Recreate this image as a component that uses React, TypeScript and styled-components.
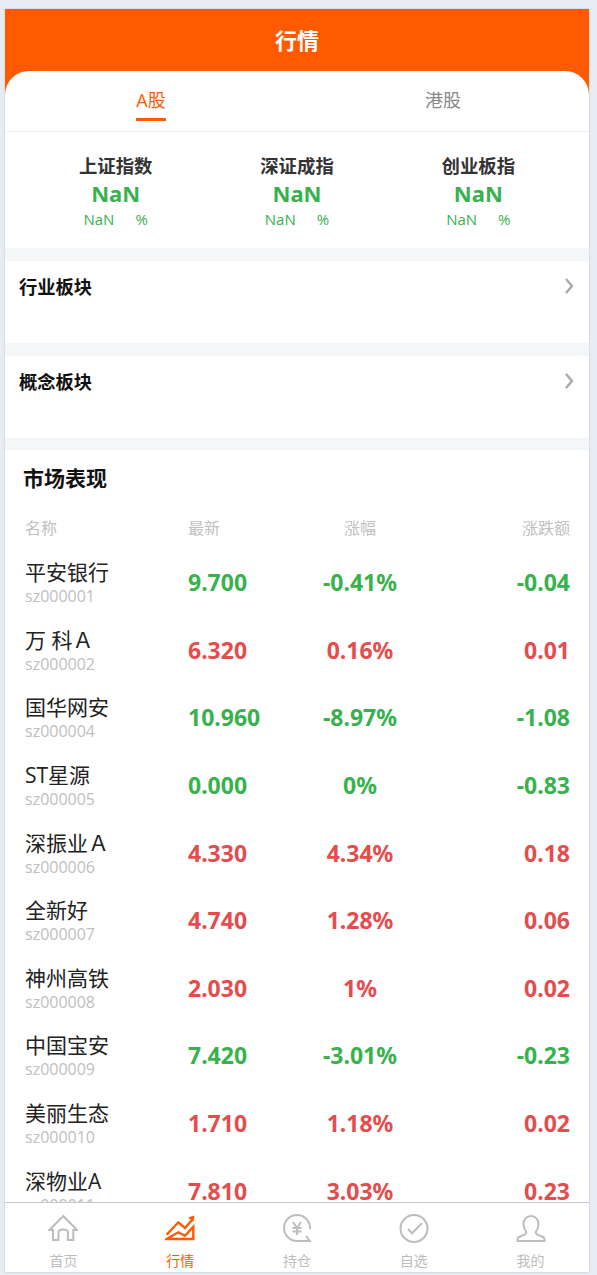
import styled, { createGlobalStyle } from "styled-components";

const GlobalStyle = createGlobalStyle`
  html, body {
    margin: 0;
    padding: 0;
    background: #e8edf5;
  }

  * {
    box-sizing: border-box;
  }
`;

const fontStack = `"Open Sans", "Noto Sans CJK SC", sans-serif`;
const orange = "#ff5a00";
const green = "#37b24d";
const red = "#e64c4c";

const Page = styled.div`
  width: 597px;
  height: 1275px;
  padding: 9px 8px 3px 5px;
  font-family: ${fontStack};
  overflow: hidden;
`;

const Phone = styled.div`
  position: relative;
  height: 100%;
  background: #fff;
  overflow: hidden;
  display: flex;
  flex-direction: column;
  box-shadow: 0 0 2px rgba(0, 0, 0, 0.2);
`;

const Header = styled.div`
  height: 86px;
  flex-shrink: 0;
  background: ${orange};
  color: #fff;
  font-size: 22px;
  font-weight: 700;
  text-align: center;
  line-height: 63px;
`;

const Body = styled.div`
  flex-grow: 1;
  overflow: hidden;
  margin-top: -24px;
  background: #fff;
  border-radius: 24px 24px 0 0;
`;

const Tabs = styled.div`
  display: flex;
  height: 61px;
  border-bottom: 1px solid #f0f0f0;
`;

const TabCell = styled.div`
  flex: 1;
  display: flex;
  justify-content: center;
`;

const Tab = styled.div<{ $active?: boolean }>`
  height: 50px;
  padding-top: 15px;
  font-size: 18px;
  line-height: 28px;
  color: ${(props) => (props.$active ? orange : "#888")};
  border-bottom: 3px solid ${(props) => (props.$active ? orange : "transparent")};
`;

const Indexes = styled.div`
  display: flex;
  padding: 21px 20px 0;
  height: 116px;
`;

const IndexItem = styled.div`
  flex: 1;
  text-align: center;
`;

const IndexName = styled.div`
  font-size: 18.4px;
  font-weight: 700;
  line-height: 26px;
  color: #333;
`;

const IndexValue = styled.div`
  font-family: "Noto Sans", sans-serif;
  font-size: 22px;
  font-weight: 700;
  line-height: 29px;
  color: ${green};
`;

const IndexChange = styled.div`
  display: flex;
  justify-content: center;
  gap: 21px;
  margin-top: 1px;
  font-size: 15px;
  line-height: 20px;
  color: ${green};
`;

const Sector = styled.div`
  border-top: 13px solid #f5f6f8;
  height: 95px;
  padding: 12px 16px 12px 14px;
  display: flex;
  justify-content: space-between;
`;

const SectorTitle = styled.div`
  font-size: 18.3px;
  font-weight: 700;
  line-height: 28px;
  color: #111;
`;

const Chevron = styled.svg`
  width: 8px;
  height: 16px;
  margin-top: 5px;
  fill: none;
  stroke: #a9a9ae;
  stroke-width: 2.4;
`;

const Market = styled.div`
  border-top: 12px solid #f5f6f8;
  padding: 0 19px;
`;

const MarketTitle = styled.div`
  margin-left: -1px;
  font-size: 21px;
  font-weight: 700;
  line-height: 28px;
  padding: 14px 0 0;
  color: #111;
`;

const Columns = `
  display: grid;
  grid-template-columns: 164px 100px 1fr 100px;
  align-items: center;
`;

const HeadRow = styled.div`
  ${Columns}
  margin-top: 23px;
  height: 24px;
  font-size: 16px;
  color: #c0c0c0;
`;

const HeadName = styled.div`
  padding-left: 1px;
`;

const HeadMid = styled.div`
  text-align: center;
  padding-right: 38px;
`;

const HeadRight = styled.div`
  text-align: right;
`;

const Row = styled.div`
  ${Columns}
  height: 67.6px;
`;

const Rows = styled.div`
  margin-top: 9.5px;
`;

const StockInfo = styled.div`
  padding: 1px 0 0 1px;
`;

const StockName = styled.div`
  font-size: 21px;
  line-height: 26px;
  color: #222;
`;

const StockCode = styled.div`
  margin-top: 2px;
  font-size: 16px;
  line-height: 19px;
  color: #c0c0c0;
`;

const Num = styled.div<{ $up: boolean }>`
  font-family: "Noto Sans", sans-serif;
  font-size: 23px;
  font-weight: 700;
  color: ${(props) => (props.$up ? red : green)};
`;

const NumMid = styled(Num)`
  text-align: center;
  padding-right: 38px;
`;

const NumRight = styled(Num)`
  text-align: right;
`;

const TabBar = styled.div`
  position: absolute;
  left: 0;
  right: 0;
  bottom: 0;
  height: 70px;
  background: #fff;
  border-top: 1px solid #c8c8c8;
  display: flex;
`;

const NavItem = styled.div<{ $active?: boolean }>`
  flex: 1;
  display: flex;
  flex-direction: column;
  align-items: center;
  padding-top: 11px;
  font-size: 14px;
  line-height: 20px;
  color: ${(props) => (props.$active ? orange : "#bdbdbd")};
`;

const NavIcon = styled.svg`
  width: 30px;
  height: 30px;
  margin-bottom: 7px;
  fill: none;
  stroke: currentColor;
  stroke-width: 2;
`;

const ArrowHead = styled.path`
  fill: currentColor;
  stroke: none;
`;

const indexes = ["上证指数", "深证成指", "创业板指"];

const stocks = [
  { name: "平安银行", code: "sz000001", price: "9.700", pct: "-0.41%", diff: "-0.04", up: false },
  { name: "万 科Ａ", code: "sz000002", price: "6.320", pct: "0.16%", diff: "0.01", up: true },
  { name: "国华网安", code: "sz000004", price: "10.960", pct: "-8.97%", diff: "-1.08", up: false },
  { name: "ST星源", code: "sz000005", price: "0.000", pct: "0%", diff: "-0.83", up: false },
  { name: "深振业Ａ", code: "sz000006", price: "4.330", pct: "4.34%", diff: "0.18", up: true },
  { name: "全新好", code: "sz000007", price: "4.740", pct: "1.28%", diff: "0.06", up: true },
  { name: "神州高铁", code: "sz000008", price: "2.030", pct: "1%", diff: "0.02", up: true },
  { name: "中国宝安", code: "sz000009", price: "7.420", pct: "-3.01%", diff: "-0.23", up: false },
  { name: "美丽生态", code: "sz000010", price: "1.710", pct: "1.18%", diff: "0.02", up: true },
  { name: "深物业A", code: "sz000011", price: "7.810", pct: "3.03%", diff: "0.23", up: true },
];

const App = (): JSX.Element => {
  return (
    <Page>
      <GlobalStyle />
      <Phone>
        <Header>行情</Header>
        <Body>
          <Tabs>
            <TabCell>
              <Tab $active>A股</Tab>
            </TabCell>
            <TabCell>
              <Tab>港股</Tab>
            </TabCell>
          </Tabs>
          <Indexes>
            {indexes.map((name) => (
              <IndexItem key={name}>
                <IndexName>{name}</IndexName>
                <IndexValue>NaN</IndexValue>
                <IndexChange>
                  <span>NaN</span>
                  <span>%</span>
                </IndexChange>
              </IndexItem>
            ))}
          </Indexes>
          {["行业板块", "概念板块"].map((title) => (
            <Sector key={title}>
              <SectorTitle>{title}</SectorTitle>
              <Chevron viewBox="0 0 8 16">
                <path d="M1 1l6 7-6 7" />
              </Chevron>
            </Sector>
          ))}
          <Market>
            <MarketTitle>市场表现</MarketTitle>
            <HeadRow>
              <HeadName>名称</HeadName>
              <div>最新</div>
              <HeadMid>涨幅</HeadMid>
              <HeadRight>涨跌额</HeadRight>
            </HeadRow>
            <Rows>
              {stocks.map((stock) => (
                <Row key={stock.code}>
                  <StockInfo>
                    <StockName>{stock.name}</StockName>
                    <StockCode>{stock.code}</StockCode>
                  </StockInfo>
                  <Num $up={stock.up}>{stock.price}</Num>
                  <NumMid $up={stock.up}>{stock.pct}</NumMid>
                  <NumRight $up={stock.up}>{stock.diff}</NumRight>
                </Row>
              ))}
            </Rows>
          </Market>
        </Body>
        <TabBar>
          <NavItem>
            <NavIcon viewBox="0 0 30 30">
              <path d="M15.300 2L1.500 16H5V26H10.500V18c0-2 2-2.500 4.700-2.500s4.700.5 4.700 2.500V26H25.300V16H29z" />
            </NavIcon>
            首页
          </NavItem>
          <NavItem $active>
            <NavIcon viewBox="0 0 30 30">
              <path d="M1.700 20.700L13.300 8.300 20 14l7-8" strokeWidth="2.400" />
              <ArrowHead d="M23 3.500L29.500 1.500 28.500 8z" />
              <path d="M1.700 25L13.300 18.300 20 21.700l8.300-9V25z" strokeWidth="2.400" />
            </NavIcon>
            行情
          </NavItem>
          <NavItem>
            <NavIcon viewBox="0 0 30 30">
              <path d="M28 15A13 13 0 1 0 15 27H28L24 22" />
              <path d="M11 8l4 6 4-6M15 14v7M10.500 14h9M10.500 17.500h9" />
            </NavIcon>
            持仓
          </NavItem>
          <NavItem>
            <NavIcon viewBox="0 0 30 30">
              <circle cx="15" cy="14.500" r="13.500" />
              <path d="M9 15l4 4.300 10-10" />
            </NavIcon>
            自选
          </NavItem>
          <NavItem>
            <NavIcon viewBox="0 0 30 30">
              <path d="M15 2c-4.500 0-7.500 3.500-7.500 8 0 3 1 5.500 2.500 7.500.5 1 .2 2.200-1 2.800L3 23c-1 .5-1.500 1.500-1.500 2.500V27h27v-1.500c0-1-.5-2-1.500-2.500l-6-2.700c-1.200-.6-1.500-1.800-1-2.800 1.500-2 2.500-4.500 2.500-7.500 0-4.500-3-8-7.500-8z" />
            </NavIcon>
            我的
          </NavItem>
        </TabBar>
      </Phone>
    </Page>
  );
};

export default App;
